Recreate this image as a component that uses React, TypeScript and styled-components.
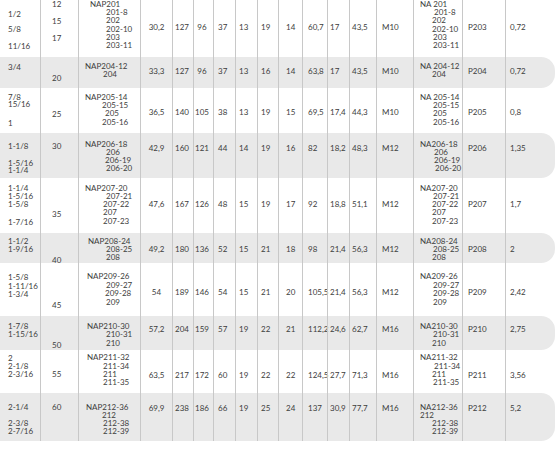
import React from "react";
import styled, { createGlobalStyle } from "styled-components";

const Global = createGlobalStyle`
  html, body { margin: 0; padding: 0; background: #ffffff; }
  body { font-family: Lato, "Open Sans", sans-serif; }
`;

const LH = 7;
const COLS = [40, 38, 62, 32, 21, 20, 22, 22, 21, 24, 25, 22, 27, 37, 49, 43, 50];
const LEFTS = COLS.reduce<number[]>((acc, w, i) => {
  acc.push(i === 0 ? 0 : acc[i - 1] + COLS[i - 1]);
  return acc;
}, []);

type Ln = [number, string, number?];

type RowData = {
  top: number;
  h: number;
  gray: boolean;
  inch: Ln[];
  mm: Ln[];
  nap: Ln[];
  vy: number;
  vals: string[];
  na: Ln[];
  p: string;
  w: string;
};

const VALUE_COLS: { col: number; align: "left" | "center"; pad: number }[] = [
  { col: 3, align: "center", pad: 0 },
  { col: 4, align: "left", pad: 2 },
  { col: 5, align: "center", pad: -3 },
  { col: 6, align: "left", pad: 4 },
  { col: 7, align: "left", pad: 3 },
  { col: 8, align: "left", pad: 3 },
  { col: 9, align: "left", pad: 7 },
  { col: 10, align: "left", pad: 5 },
  { col: 11, align: "left", pad: 2 },
  { col: 12, align: "left", pad: 2 },
  { col: 13, align: "left", pad: 5 },
];

const ROWS: RowData[] = [
  {
    top: 0, h: 57, gray: false,
    inch: [[14, "1/2"], [29, "5/8"], [46, "11/16"]],
    mm: [[4.5, "12"], [21, "15"], [38.5, "17"]],
    nap: [[4.5, "NAP201", 90], [12.5, "201-8", 106], [20.5, "202", 106], [29, "202-10", 106], [37, "203", 106], [45, "203-11", 106]],
    vy: 27,
    vals: ["30,2", "127", "96", "37", "13", "19", "14", "60,7", "17", "43,5", "M10"],
    na: [[4.5, "NA 201", 420], [12.5, "201-8", 434], [20.5, "202", 432], [29, "202-10", 432], [37, "203", 433], [45, "203-11", 433]],
    p: "P203", w: "0,72",
  },
  {
    top: 57, h: 31, gray: true,
    inch: [[67, "3/4"]],
    mm: [[78, "20"]],
    nap: [[66.5, "NAP204-12", 85], [74, "204", 103]],
    vy: 71.5,
    vals: ["33,3", "127", "96", "37", "13", "16", "14", "63,8", "17", "43,5", "M10"],
    na: [[66.5, "NA 204-12", 420], [74, "204", 432]],
    p: "P204", w: "0,72",
  },
  {
    top: 88, h: 45, gray: false,
    inch: [[97, "7/8"], [104.5, "15/16"], [123, "1"]],
    mm: [[114, "25"]],
    nap: [[97, "NAP205-14", 85], [105, "205-15", 102], [113.5, "205", 105], [122.5, "205-16", 102]],
    vy: 112,
    vals: ["36,5", "140", "105", "38", "13", "19", "15", "69,5", "17,4", "44,3", "M10"],
    na: [[97, "NA 205-14", 420], [105, "205-15", 433], [113.5, "205", 433], [122.5, "205-16", 433]],
    p: "P205", w: "0,8",
  },
  {
    top: 133, h: 45, gray: true,
    inch: [[146, "1-1/8"], [163, "1-5/16"], [170.5, "1-1/4"]],
    mm: [[146, "30"]],
    nap: [[144.5, "NAP206-18", 85], [152.5, "206", 106], [160.5, "206-19", 105], [168.5, "206-20", 106]],
    vy: 148,
    vals: ["42,9", "160", "121", "44", "14", "19", "16", "82", "18,2", "48,3", "M12"],
    na: [[144.5, "NA206-18", 420], [152.5, "206", 434], [160.5, "206-19", 434], [168.5, "206-20", 435]],
    p: "P206", w: "1,35",
  },
  {
    top: 178, h: 55, gray: false,
    inch: [[188, "1-1/4"], [196.5, "1-5/16"], [204.5, "1-5/8"], [222.5, "1-7/16"]],
    mm: [[214, "35"]],
    nap: [[188, "NAP207-20", 85], [196, "207-21", 106], [204, "207-22", 103], [212.5, "207", 103], [221.5, "207-23", 103]],
    vy: 204,
    vals: ["47,6", "167", "126", "48", "15", "19", "17", "92", "18,8", "51,1", "M12"],
    na: [[188, "NA207-20", 420], [196, "207-21", 433], [204, "207-22", 432], [212.5, "207", 432], [221.5, "207-23", 432]],
    p: "P207", w: "1,7",
  },
  {
    top: 233, h: 30, gray: true,
    inch: [[241, "1-1/2"], [249, "1-9/16"]],
    mm: [[260, "40"]],
    nap: [[241, "NAP208-24", 88], [249, "208-25", 106], [257, "208", 106]],
    vy: 249.5,
    vals: ["49,2", "180", "136", "52", "15", "21", "18", "98", "21,4", "56,3", "M12"],
    na: [[241, "NA208-24", 420], [249, "208-25", 433], [257, "208", 432]],
    p: "P208", w: "2",
  },
  {
    top: 263, h: 53, gray: false,
    inch: [[277.5, "1-5/8"], [286, "1-11/16"], [294.5, "1-3/4"]],
    mm: [[305, "45"]],
    nap: [[276.5, "NAP209-26", 87], [285, "209-27", 106], [293.5, "209-28", 105], [302, "209", 106]],
    vy: 292,
    vals: ["54", "189", "146", "54", "15", "21", "20", "105,5", "21,4", "56,3", "M12"],
    na: [[276.5, "NA209-26", 420], [285, "209-27", 433], [293.5, "209-28", 433], [302, "209", 433]],
    p: "P209", w: "2,42",
  },
  {
    top: 316, h: 34, gray: true,
    inch: [[326, "1-7/8"], [334, "1-15/16"]],
    mm: [[345, "50"]],
    nap: [[326, "NAP210-30", 87], [334.5, "210-31", 106], [343, "210", 106]],
    vy: 329.5,
    vals: ["57,2", "204", "159", "57", "19", "22", "21", "112,2", "24,6", "62,7", "M16"],
    na: [[326, "NA210-30", 420], [334.5, "210-31", 433], [343, "210", 432]],
    p: "P210", w: "2,75",
  },
  {
    top: 350, h: 43, gray: false,
    inch: [[358, "2"], [366, "2-1/8"], [374, "2-3/16"]],
    mm: [[374, "55"]],
    nap: [[357.5, "NAP211-32", 87], [366, "211-34", 103], [374, "211", 103], [382, "211-35", 103]],
    vy: 375,
    vals: ["63,5", "217", "172", "60", "19", "22", "22", "124,5", "27,7", "71,3", "M16"],
    na: [[357.5, "NA211-32", 420], [366, "211-34", 434], [374, "211", 432], [382, "211-35", 433]],
    p: "P211", w: "3,56",
  },
  {
    top: 393, h: 48, gray: true,
    inch: [[407, "2-1/4"], [423.5, "2-3/8"], [431.5, "2-7/16"]],
    mm: [[407, "60"]],
    nap: [[407, "NAP212-36", 86], [415.5, "212", 102], [423.5, "212-38", 103], [431.5, "212-39", 103]],
    vy: 408.5,
    vals: ["69,9", "238", "186", "66", "19", "25", "24", "137", "30,9", "77,7", "M16"],
    na: [[407, "NA212-36", 420], [415.5, "212", 420], [423.5, "212-38", 432], [431.5, "212-39", 432]],
    p: "P212", w: "5,2",
  },
];

const Page = styled.div`
  width: 560px;
  height: 451px;
  overflow: hidden;
  background: #ffffff;
`;

const Table = styled.div`
  display: flex;
  flex-direction: column;
  width: 555px;
`;

const Row = styled.div<{ $h: number; $gray: boolean }>`
  display: grid;
  grid-template-columns: ${COLS.map((c) => `${c}px`).join(" ")};
  height: ${(p) => p.$h}px;
  background: ${(p) => (p.$gray ? "#e9e9e9" : "#ffffff")};
  border-radius: ${(p) => (p.$gray ? "0 14px 14px 0" : "0")};
`;

const Cell = styled.div<{ $first?: boolean; $align: "left" | "center"; $pad: number; $pt: number }>`
  box-sizing: border-box;
  display: flex;
  flex-direction: column;
  align-items: ${(p) => (p.$align === "center" ? "center" : "flex-start")};
  border-left: ${(p) => (p.$first ? "none" : "1px solid #c8c8c8")};
  padding-top: ${(p) => p.$pt}px;
  padding-left: ${(p) => (p.$align === "left" ? p.$pad : p.$pad < 0 ? 0 : p.$pad)}px;
  padding-right: ${(p) => (p.$align === "center" && p.$pad < 0 ? -p.$pad : 0)}px;
  font-family: Lato, "Open Sans", sans-serif;
  font-size: 8px;
  line-height: ${LH}px;
  color: #3d3d3d;
  white-space: nowrap;
  overflow: visible;
`;

const Line = styled.div<{ $mt: number; $ml: number }>`
  margin-top: ${(p) => p.$mt}px;
  margin-left: ${(p) => p.$ml}px;
  height: ${LH}px;
`;

function Lines({
  lines,
  rowTop,
  col,
  align = "left",
  pad = 0,
}: {
  lines: Ln[];
  rowTop: number;
  col: number;
  align?: "left" | "center";
  pad?: number;
}) {
  const first = lines[0];
  const pt = first ? first[0] - rowTop - LH / 2 : 0;
  const colLeft = LEFTS[col] + (col === 0 ? 0 : 1);
  const usesX = lines.some((l) => l[2] !== undefined);
  return (
    <Cell $first={col === 0} $align={align} $pad={usesX ? 0 : pad} $pt={pt}>
      {lines.map((l, i) => (
        <Line
          key={i}
          $mt={i === 0 ? 0 : l[0] - lines[i - 1][0] - LH}
          $ml={l[2] !== undefined ? (l[2] as number) - colLeft : 0}
        >
          {l[1]}
        </Line>
      ))}
    </Cell>
  );
}

export default function App() {
  return (
    <Page>
      <Global />
      <Table>
        {ROWS.map((r, ri) => (
          <Row key={ri} $h={r.h} $gray={r.gray}>
            <Lines lines={r.inch} rowTop={r.top} col={0} pad={8} />
            <Lines lines={r.mm} rowTop={r.top} col={1} pad={11} />
            <Lines lines={r.nap} rowTop={r.top} col={2} />
            {VALUE_COLS.map((vc, vi) => (
              <Lines
                key={vi}
                lines={[[r.vy, r.vals[vi]]]}
                rowTop={r.top}
                col={vc.col}
                align={vc.align}
                pad={vc.pad}
              />
            ))}
            <Lines lines={r.na} rowTop={r.top} col={14} />
            <Lines lines={[[r.vy, r.p]]} rowTop={r.top} col={15} pad={5} />
            <Lines lines={[[r.vy, r.w]]} rowTop={r.top} col={16} pad={4} />
          </Row>
        ))}
      </Table>
    </Page>
  );
}
